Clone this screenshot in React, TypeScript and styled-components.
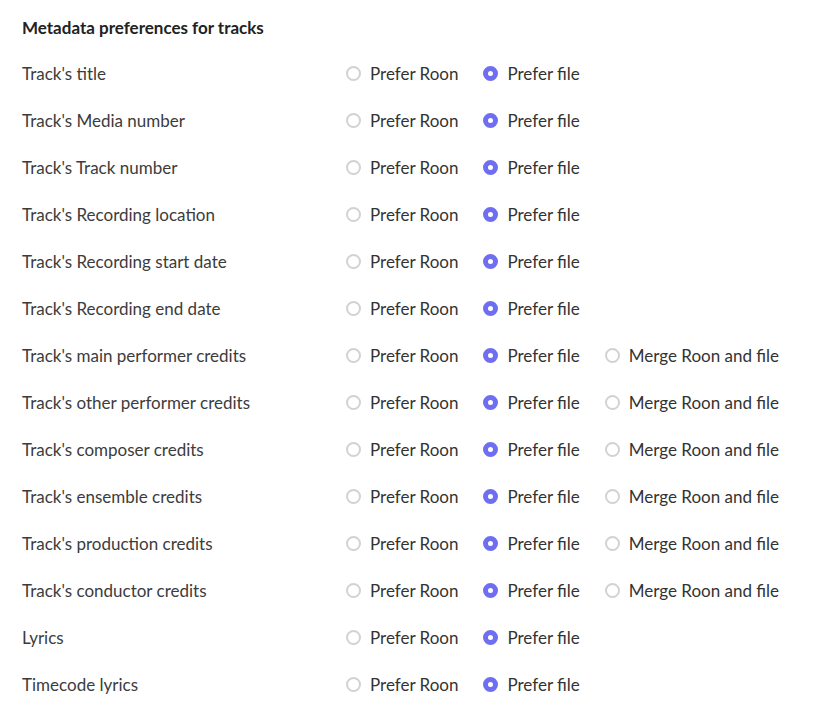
import { createGlobalStyle } from "styled-components";
import styled from "styled-components";

const GlobalStyle = createGlobalStyle`
    body {
        margin: 0;
        background: #ffffff;
        font-family: Lato, "Open Sans", sans-serif;
        color: #333333;
    }
`;

const Page = styled.div`
    padding: 16px 22px 0 22px;
`;

const Title = styled.h3`
    margin: 0 0 10px 0;
    font-size: 17px;
    font-weight: 700;
    line-height: 24px;
    color: #222222;
`;

const Row = styled.div`
    display: flex;
    align-items: center;
    height: 47px;
`;

const Label = styled.div`
    width: 324px;
    flex-shrink: 0;
    font-size: 17px;
    color: #3c3c3c;
`;

const Options = styled.div`
    display: flex;
    align-items: center;
    gap: 25px;
`;

const Option = styled.label`
    display: flex;
    align-items: center;
    gap: 9px;
    font-size: 17px;
    color: #333333;
    cursor: pointer;
`;

const Radio = styled.span<{ $checked: boolean }>`
    display: block;
    flex-shrink: 0;
    box-sizing: border-box;
    width: 15px;
    height: 15px;
    border-radius: 50%;
    border: ${(p) => (p.$checked ? "5px solid #6f6ef0" : "2px solid #d2d2d2")};
    background: #ffffff;
`;

type Pref = {
    label: string;
    merge?: boolean;
};

const prefs: Pref[] = [
    { label: "Track's title" },
    { label: "Track's Media number" },
    { label: "Track's Track number" },
    { label: "Track's Recording location" },
    { label: "Track's Recording start date" },
    { label: "Track's Recording end date" },
    { label: "Track's main performer credits", merge: true },
    { label: "Track's other performer credits", merge: true },
    { label: "Track's composer credits", merge: true },
    { label: "Track's ensemble credits", merge: true },
    { label: "Track's production credits", merge: true },
    { label: "Track's conductor credits", merge: true },
    { label: "Lyrics" },
    { label: "Timecode lyrics" },
];

const App = () => {
    return (<>
        <GlobalStyle />
        <Page>
            <Title>Metadata preferences for tracks</Title>
            {prefs.map((p) => (
                <Row key={p.label}>
                    <Label>{p.label}</Label>
                    <Options>
                        <Option><Radio $checked={false} />Prefer Roon</Option>
                        <Option><Radio $checked={true} />Prefer file</Option>
                        {p.merge && <Option><Radio $checked={false} />Merge Roon and file</Option>}
                    </Options>
                </Row>
            ))}
        </Page>
    </>)
}

export default App;
